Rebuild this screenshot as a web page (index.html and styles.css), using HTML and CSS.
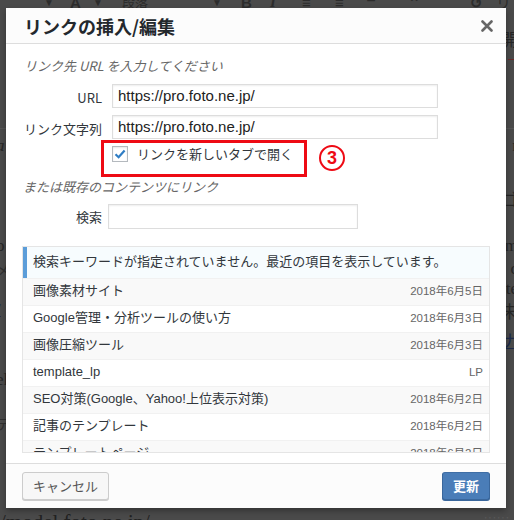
FILE: index.html
```html
<!DOCTYPE html>
<html lang="ja">
<head>
<meta charset="UTF-8">
<meta name="viewport" content="width=device-width, initial-scale=1.0">
<title>リンクの挿入/編集</title>
<link rel="stylesheet" href="styles.css">
</head>
<body>
<div class="editor">
  <div class="toolbar">
    <span class="tb tb-1">▼</span>
    <span class="tb tb-2">A</span>
    <span class="tb tb-3">▼</span>
    <span class="tb tb-4">段落</span>
    <span class="tb tb-5">▼</span>
    <span class="tb tb-6">B</span>
    <span class="tb tb-7">I</span>
    <span class="tb tb-8">≡</span>
    <span class="tb tb-9">≡</span>
    <span class="tb tb-10">❝</span>
    <span class="tb tb-11">⌃</span>
    <span class="tb tb-12">↺</span>
    <span class="tb tb-13">リ</span>
  </div>
  <div class="content">
    <div class="line h20"><span></span><span class="r">開</span></div>
    <div class="line h36"><span></span><span class="r red-line"></span></div>
    <div class="line h44 rule"><span></span><span></span></div>
    <div class="line h34"><span class="l it">a</span><span class="r">r</span></div>
    <div class="line h70"><span></span><span class="r">ゴ</span></div>
    <div class="line h26"><span class="l">o</span><span class="r">m</span></div>
    <div class="line h20"><span class="l sm">メ</span><span class="r">c</span></div>
    <div class="line h20"><span></span><span class="r">te</span></div>
    <div class="line h22"><span class="l link">/</span><span class="r">未</span></div>
    <div class="line h36"><span></span><span class="r link">ナ</span></div>
    <div class="line h46"><span class="l">el</span><span></span></div>
    <div class="line h40"><span class="l sm">テ</span><span></span></div>
  </div>
  <div class="bottom-url"><span>/model.foto.ne.jp/</span><span class="dots">::::::</span></div>
</div>

<div class="modal">
  <div class="modal-header">
    <h1 class="modal-title">リンクの挿入/編集</h1>
    <button class="close" aria-label="閉じる">
      <svg width="12" height="12" viewBox="0 0 12 12"><path d="M1.5 1.5 L10.5 10.5 M10.5 1.5 L1.5 10.5" stroke="#666" stroke-width="2.6" stroke-linecap="round"/></svg>
    </button>
  </div>

  <div class="modal-body">
    <p class="hint">リンク先 URL を入力してください</p>
    <div class="fields">
      <label class="field-label">URL</label>
      <div class="input">https://pro.foto.ne.jp/</div>
      <label class="field-label">リンク文字列</label>
      <div class="input">https://pro.foto.ne.jp/</div>
    </div>
    <div class="check-row">
      <span class="checkbox">
        <svg width="14" height="14" viewBox="0 0 14 14"><path d="M2.5 7.2 L5.6 10.2 L11.6 3.4" fill="none" stroke="#2f7dc4" stroke-width="2.2"/></svg>
      </span>
      <span class="check-text">リンクを新しいタブで開く</span>
    </div>
    <p class="hint hint-2">または既存のコンテンツにリンク</p>
    <div class="search-row">
      <label class="field-label">検索</label>
      <div class="input search-input"></div>
    </div>

    <div class="results">
      <div class="notice">検索キーワードが指定されていません。最近の項目を表示しています。</div>
      <div class="item alt"><span>画像素材サイト</span><span class="date">2018年6月5日</span></div>
      <div class="item"><span>Google管理・分析ツールの使い方</span><span class="date">2018年6月3日</span></div>
      <div class="item alt"><span>画像圧縮ツール</span><span class="date">2018年6月3日</span></div>
      <div class="item"><span>template_lp</span><span class="date">LP</span></div>
      <div class="item alt"><span>SEO対策(Google、Yahoo!上位表示対策)</span><span class="date">2018年6月2日</span></div>
      <div class="item"><span>記事のテンプレート</span><span class="date">2018年6月2日</span></div>
      <div class="item alt"><span>テンプレートページ</span><span class="date">2018年6月2日</span></div>
    </div>
  </div>

  <div class="modal-footer">
    <button class="btn">キャンセル</button>
    <button class="btn btn-primary">更新</button>
  </div>

  <!-- annotation -->
  <div class="mark-box"></div>
  <span class="mark-num">3</span>
</div>
</body>
</html>
```

FILE: styles.css
```css
body {
  margin: 0;
  width: 514px;
  height: 520px;
  overflow: hidden;
  background-color: #4a4a4a;
  font-family: "Liberation Sans", "Noto Sans CJK JP", sans-serif;
  position: relative;
}

/* dimmed editor behind the dialog */
.editor {
  height: 520px;
  display: flex;
  flex-direction: column;
  color: #262626;
}
.toolbar {
  height: 8px;
  overflow: hidden;
  position: relative;
}
.tb {
  position: absolute;
  bottom: 0;
  font-size: 15px;
  line-height: 11px;
  color: #2c2c2c;
  font-weight: bold;
}
.tb-1 { left: 44px; font-size: 10px; }
.tb-2 { left: 70px; }
.tb-3 { left: 93px; font-size: 10px; }
.tb-4 { left: 122px; font-size: 13px; font-weight: normal; }
.tb-5 { left: 212px; font-size: 10px; }
.tb-6 { left: 241px; }
.tb-7 { left: 270px; font-style: italic; font-family: "Liberation Serif", serif; }
.tb-8 { left: 302px; }
.tb-9 { left: 335px; }
.tb-10 { left: 366px; font-size: 18px; }
.tb-11 { left: 408px; }
.tb-12 { left: 470px; }
.tb-13 { left: 496px; font-weight: normal; }

.content {
  flex: 1;
  padding-top: 20px;
  font-family: "Liberation Serif", "Noto Sans CJK JP", serif;
  font-size: 17px;
}
.line {
  display: flex;
  justify-content: space-between;
  align-items: center;
  overflow: hidden;
}
.line .l { margin-left: -4px; }
.line .r { margin-right: -4px; }
.line .sm { font-size: 14px; font-family: "Noto Sans CJK JP", sans-serif; color: #303030; }
.line .it { font-style: italic; }
.line .link { color: #1d2a4a; text-decoration: underline; }
.red-line {
  width: 10px;
  height: 14px;
  border-top: 1px solid #6a2a2a;
}
.rule { border-bottom: 1px solid #555; }
.h20 { height: 20px; }
.h22 { height: 22px; }
.h26 { height: 26px; }
.h34 { height: 34px; }
.h36 { height: 36px; }
.h40 { height: 40px; }
.h44 { height: 44px; }
.h46 { height: 46px; }
.h70 { height: 70px; }

.bottom-url {
  height: 12px;
  overflow: hidden;
  font-family: "Liberation Serif", serif;
  font-size: 21px;
  line-height: 28px;
  color: #222;
  display: flex;
  justify-content: space-between;
  align-items: flex-start;
}
.dots {
  color: #5a5a5a;
  font-size: 12px;
  line-height: 22px;
  letter-spacing: 1px;
  padding-right: 4px;
}

/* dialog */
.modal {
  position: absolute;
  left: 6px;
  top: 8px;
  width: 500px;
  height: 500px;
  background: #fff;
  box-shadow: 0 3px 6px rgba(0, 0, 0, 0.3);
  display: flex;
  flex-direction: column;
  color: #32373c;
}
.modal-header {
  height: 35px;
  border-bottom: 1px solid #ddd;
  display: flex;
  align-items: center;
  justify-content: space-between;
  padding: 0 12px 0 18px;
  background: #fcfcfc;
}
.modal-title {
  margin: 0;
  font-family: "Noto Sans CJK JP", sans-serif;
  font-size: 18px;
  line-height: 24px;
  font-weight: bold;
  color: #23282d;
  padding-top: 1px;
}
.close {
  border: none;
  background: none;
  padding: 0;
  width: 14px;
  height: 14px;
  display: flex;
  align-items: center;
  justify-content: center;
  margin-top: 1px;
}

.modal-body {
  flex: 1;
  padding: 13px 16px 0;
  font-size: 13px;
}
.hint {
  margin: 0 0 0 2px;
  font-style: italic;
  color: #666;
  line-height: 18px;
  font-family: "Noto Sans CJK JP", sans-serif;
}
.fields {
  display: grid;
  grid-template-columns: 80px 326px;
  column-gap: 10px;
  row-gap: 7px;
  margin-top: 9px;
  align-items: center;
}
.field-label {
  text-align: right;
  color: #32373c;
  font-family: "Noto Sans CJK JP", sans-serif;
  line-height: 18px;
  padding-top: 4px;
}
.input {
  height: 22px;
  border: 1px solid #ddd;
  box-shadow: inset 0 1px 2px rgba(0, 0, 0, 0.07);
  font-size: 15px;
  line-height: 22px;
  padding: 0 5px;
  color: #222;
}
.check-row {
  display: flex;
  align-items: center;
  margin: 7px 0 0 90px;
  height: 16px;
}
.checkbox {
  width: 14px;
  height: 14px;
  border: 1px solid #b4b9be;
  box-shadow: inset 0 1px 2px rgba(0, 0, 0, 0.1);
  display: flex;
  align-items: center;
  justify-content: center;
}
.check-text {
  margin-left: 9px;
  font-family: "Noto Sans CJK JP", sans-serif;
  line-height: 16px;
  color: #32373c;
}
.hint-2 {
  margin-top: 16px;
  margin-left: 1px;
}
.search-row {
  display: flex;
  align-items: center;
  margin-top: 8px;
}
.search-row .field-label {
  width: 80px;
  padding-top: 0;
}
.search-input {
  width: 238px;
  height: 23px;
  margin-left: 6px;
}

.results {
  margin-top: 17px;
  height: 205px;
  border: 1px solid #e5e5e5;
  overflow: hidden;
  font-family: "Liberation Sans", "Noto Sans CJK JP", sans-serif;
}
.notice {
  height: 31px;
  line-height: 29px;
  border-left: 4px solid #5b9dd9;
  background: #f7fcfe;
  padding-left: 6px;
  color: #32373c;
}
.item {
  border-top: 1px solid #f1f1f1;
  display: flex;
  align-items: center;
  justify-content: space-between;
  padding: 0 6px 2px 10px;
  background: #fff;
  color: #32373c;
  font-size: 13px;
  line-height: 22px;
  box-sizing: border-box;
  height: 27px;
}
.item.alt { background: #f9f9f9; }
.date {
  font-size: 11.5px;
  color: #666;
}

.modal-footer {
  height: 44px;
  border-top: 1px solid #ddd;
  background: #fcfcfc;
  display: flex;
  align-items: flex-start;
  justify-content: space-between;
  padding: 0 16px;
}
.btn {
  margin-top: 8px;
  height: 28px;
  padding: 0;
  white-space: nowrap;
  font-family: "Noto Sans CJK JP", sans-serif;
  font-size: 13px;
  line-height: 26px;
  border: 1px solid #ccc;
  border-radius: 3px;
  background: #f7f7f7;
  box-shadow: 0 1px 0 #ccc;
  color: #555;
  width: 87px;
}
.btn-primary {
  width: 48px;
  background: #4a7db8;
  border-color: #3f6ea5 #3a679c #3a679c;
  box-shadow: 0 1px 0 #3a679c;
  color: #fff;
  font-weight: bold;
}

/* annotation overlay */
.mark-box {
  position: absolute;
  left: 95px;
  top: 132px;
  width: 200px;
  height: 31px;
  border: 3px solid #ee0a14;
}
.mark-num {
  position: absolute;
  left: 313px;
  top: 137px;
  width: 22px;
  height: 22px;
  border: 2.5px solid #ee0a14;
  border-radius: 50%;
  color: #ee0a14;
  font-family: "Liberation Sans", sans-serif;
  font-weight: bold;
  font-size: 18px;
  line-height: 22px;
  text-align: center;
}
```
